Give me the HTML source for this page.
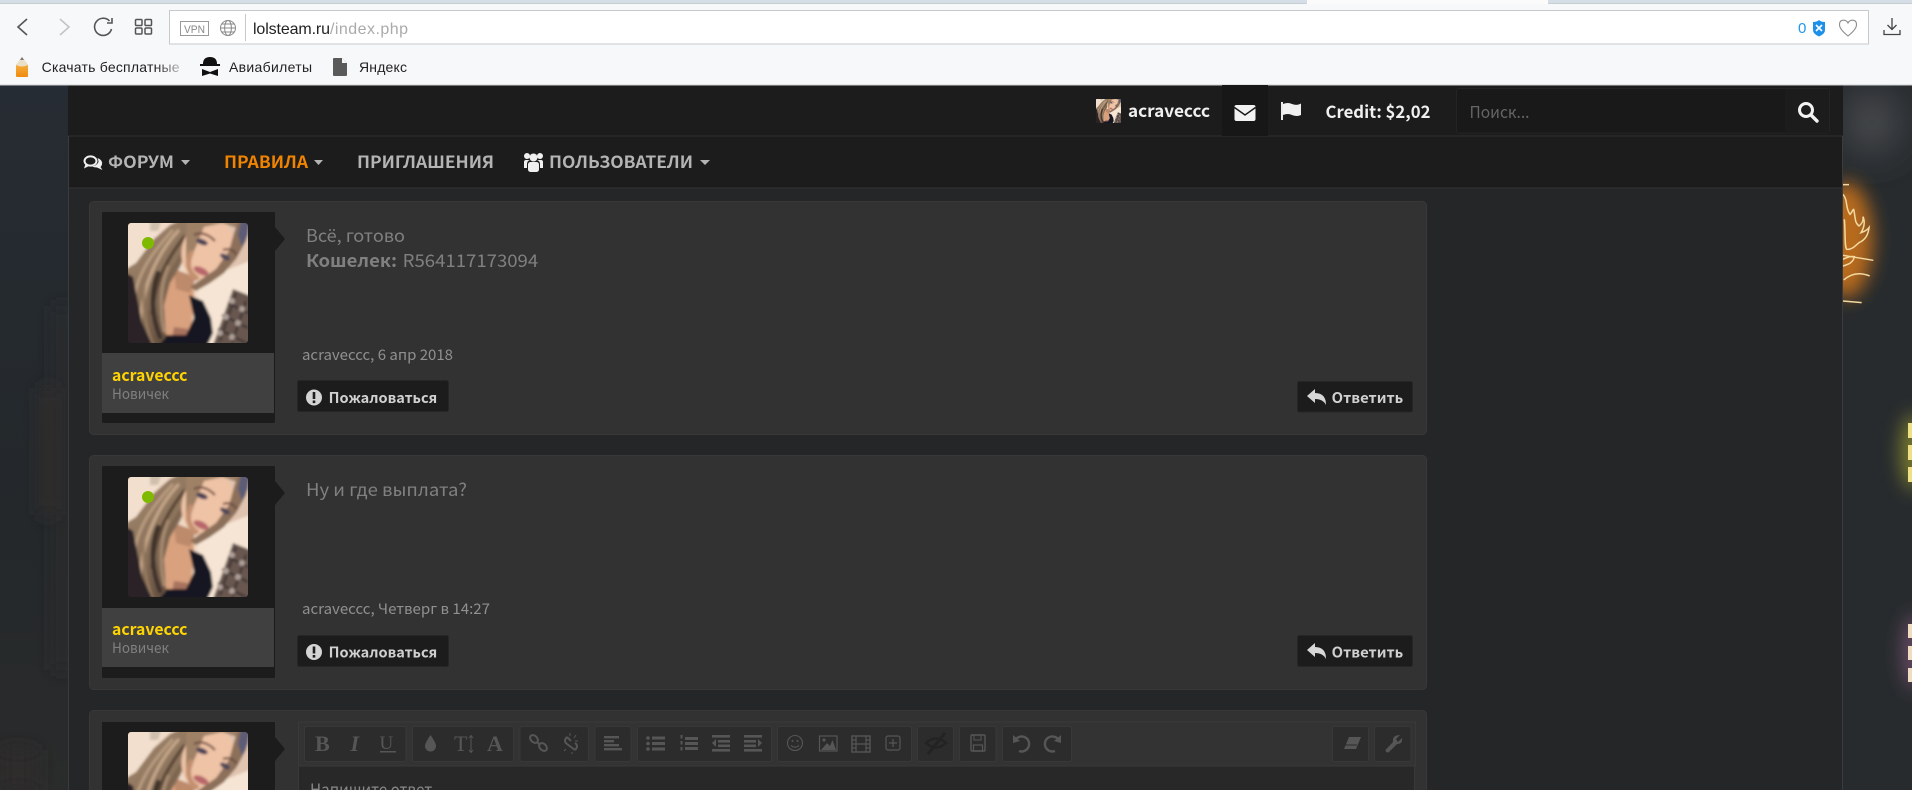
<!DOCTYPE html>
<html lang="ru"><head><meta charset="utf-8"><title>lolsteam.ru</title>
<style>
html,body{margin:0;padding:0;width:1912px;height:790px;overflow:hidden;background:#262a2d}
svg{display:block}
text{font-family:"Noto Sans CJK JP","DejaVu Sans",sans-serif;white-space:pre}
.ui{font-family:"Liberation Sans","Noto Sans CJK JP",sans-serif}
.nav{font-size:16.5px;font-weight:700;fill:#b4b4b4}
.msg{font-size:17.5px;fill:#808080}
.date{font-size:14.5px;fill:#909090}
.btn{font-size:14.5px;font-weight:700;fill:#d0d0d0}
.nm{font-size:16px;font-weight:700;fill:#ffd400}
.rank{font-size:14.5px;fill:#808080}
.ic{fill:none;stroke:#565656;stroke-width:2}
.if{fill:#565656}
.tb{fill:#2c2c2c;stroke:#383838}
.serif{font-family:"Liberation Serif",serif;fill:#565656;font-weight:700}
</style></head><body>
<svg width="1912" height="790" viewBox="0 0 1912 790" xmlns="http://www.w3.org/2000/svg">
<defs>
<filter id="b1" filterUnits="userSpaceOnUse" x="-20" y="-20" width="160" height="160"><feGaussianBlur stdDeviation="1.2"/></filter>
<filter id="b8" filterUnits="userSpaceOnUse" x="0" y="0" width="1912" height="790"><feGaussianBlur stdDeviation="9"/></filter>
<filter id="b12" filterUnits="userSpaceOnUse" x="0" y="0" width="1912" height="790"><feGaussianBlur stdDeviation="9"/></filter>
<filter id="b20" filterUnits="userSpaceOnUse" x="0" y="0" width="1912" height="790"><feGaussianBlur stdDeviation="20"/></filter>
<linearGradient id="lb" x1="0" y1="0" x2="0" y2="1"><stop offset="0" stop-color="#262c33"/><stop offset=".6" stop-color="#24282b"/><stop offset="1" stop-color="#2a2b2b"/></linearGradient>
<linearGradient id="fade" x1="0" y1="0" x2="1" y2="0"><stop offset=".82" stop-color="#222"/><stop offset="1" stop-color="#bbb"/></linearGradient>
<linearGradient id="hair" x1="0" y1="0" x2="0.6" y2="1"><stop offset="0" stop-color="#a58a70"/><stop offset=".55" stop-color="#8d745c"/><stop offset="1" stop-color="#5e493b"/></linearGradient>
<linearGradient id="pen" x1="0" y1="0" x2="0" y2="1"><stop offset="0" stop-color="#f7c35a"/><stop offset="1" stop-color="#f08a10"/></linearGradient>
<clipPath id="rr"><rect width="120" height="120" rx="3"/></clipPath>
<symbol id="ava" viewBox="0 0 120 120">
<g clip-path="url(#rr)"><g filter="url(#b1)">
<rect x="-10" y="-10" width="140" height="140" fill="#f0dac8"/>
<rect x="-5" y="-5" width="36" height="60" fill="#f3dfce"/>
<polygon points="22,-5 34,-5 30,8 22,8" fill="#cfc0ac"/>
<polygon points="100,-10 130,-10 130,60 100,60" fill="#e0c4b0"/>
<polygon points="70,58 130,35 130,130 70,130" fill="#f6e5d4"/>
<!-- chest -->
<polygon points="42,48 66,54 66,76 62,116 38,116 36,80" fill="#d9a17e"/>
<polygon points="46,46 68,54 62,70 48,66" fill="#bd8a6c"/>
<polygon points="46,104 60,106 58,116 44,116" fill="#a8735e"/>
<!-- dress -->
<polygon points="61,72 75,78 83,95 85,110 78,125 30,125 34,112 58,112 66,95" fill="#191724"/>
<!-- hair mass -->
<polygon points="66,-10 42,2 26,16 8,40 -5,48 -5,125 28,125 38,114 36,82 42,60 52,44 60,26 68,6 72,-10" fill="url(#hair)"/>
<g fill="none" stroke-linecap="round">
<path d="M50,8 C30,30 15,60 12,100" stroke="#c3a588" stroke-width="3.4"/>
<path d="M44,8 C26,28 8,50 6,80" stroke="#b99c80" stroke-width="3"/>
<path d="M56,14 C40,35 28,55 24,90" stroke="#584436" stroke-width="3.4"/>
<path d="M62,20 C50,40 36,55 33,85" stroke="#7b6550" stroke-width="4"/>
<path d="M30,50 C22,70 24,95 32,114" stroke="#3e312a" stroke-width="4.5"/>
<path d="M40,44 C33,60 31,85 36,108" stroke="#a98c72" stroke-width="3"/>
<path d="M16,62 C14,84 18,104 24,120" stroke="#957a60" stroke-width="3"/>
</g>
<!-- dark left edge -->
<polygon points="-5,48 5,54 11,84 14,100 26,125 -5,125" fill="#292327"/>
<!-- face -->
<ellipse cx="80" cy="27" rx="26" ry="32" transform="rotate(18 80 27)" fill="#efc3a5"/>
<polygon points="58,-8 116,-8 112,6 94,0 76,4 68,24 58,44" fill="#9f8166"/>
<polygon points="112,-8 124,-8 118,18 108,36 96,50 82,60 68,68 62,64 88,46 101,28 106,10" fill="#8c705a"/>
<polygon points="114,-8 122,-8 120,12 114,24 110,12" fill="#5c5b76"/>
<path d="M64,28 C58,40 60,50 70,56" stroke="#c3906f" stroke-width="5" fill="none"/>
<path d="M66,12 Q76,7 87,18" stroke="#6d4c40" stroke-width="2.2" fill="none"/>
<path d="M95,27 Q104,24 109,32" stroke="#6d4c40" stroke-width="2" fill="none"/>
<ellipse cx="74" cy="19" rx="6" ry="2.8" transform="rotate(20 74 19)" fill="#4a4156"/>
<ellipse cx="97" cy="34" rx="5.5" ry="2.6" transform="rotate(28 97 34)" fill="#4f4658"/>
<ellipse cx="73" cy="48" rx="8" ry="3.6" transform="rotate(25 73 48)" fill="#b8666a"/>
<!-- chocolate -->
<polygon points="105,66 125,74 125,125 84,125" fill="#67574f"/>
<path d="M100,80 L120,90 M94,92 L120,105 M90,106 L118,120 M108,70 L92,118 M118,78 L104,120" stroke="#3c3232" stroke-width="2.2"/>
<circle cx="104" cy="78" r="3" fill="#b0a098"/><circle cx="114" cy="86" r="3" fill="#b0a098"/><circle cx="98" cy="94" r="3" fill="#b0a098"/><circle cx="110" cy="100" r="3" fill="#b0a098"/><circle cx="92" cy="110" r="3" fill="#b0a098"/><circle cx="104" cy="114" r="3" fill="#b0a098"/>
</g></g>
</symbol>
</defs>

<!-- page background -->
<rect x="0" y="85" width="1912" height="705" fill="#272b2e"/>
<rect x="0" y="85" width="68" height="705" fill="url(#lb)"/>
<g filter="url(#b8)"><rect x="42" y="388" width="13" height="127" fill="#302f2c"/><rect x="56" y="306" width="12" height="364" fill="#2a2c2b"/><rect x="0" y="750" width="36" height="40" fill="#2d2c2a"/></g>
<g filter="url(#b20)"><ellipse cx="1872" cy="122" rx="26" ry="30" fill="#4d5052"/></g>
<g filter="url(#b12)"><ellipse cx="1846" cy="240" rx="27" ry="58" fill="#b86a1c"/>
<ellipse cx="1914" cy="452" rx="14" ry="38" fill="#77782f"/><ellipse cx="1914" cy="652" rx="12" ry="38" fill="#664a62"/></g>
<g transform="translate(1835 86) scale(.3333)" fill="none" stroke="#f3d9a0" stroke-width="4.5">
<path d="M22,296 H42"/>
<path d="M24,325 C40,345 30,365 45,385 C55,375 52,370 56,370 C62,395 58,410 72,420 C85,410 85,400 84,392 C92,410 85,430 78,440 C95,435 102,425 102,425 C100,445 90,462 72,470 C60,480 50,492 35,490 C28,480 32,440 28,400"/>
<path d="M24,508 L115,523"/><path d="M24,540 C40,535 55,530 58,512 C45,510 35,515 24,520"/>
<path d="M26,582 Q60,552 104,570"/><path d="M24,645 L80,650"/>
</g>
<g fill="#efe088"><rect x="1908" y="423" width="4" height="15"/><rect x="1908" y="445" width="4" height="15"/><rect x="1908" y="467" width="4" height="15"/></g>
<g fill="#f0dcc0"><rect x="1908" y="624" width="4" height="14"/><rect x="1908" y="646" width="4" height="14"/><rect x="1908" y="668" width="4" height="14"/></g>

<!-- container -->
<rect x="68" y="85" width="1775" height="705" fill="#242628"/>
<rect x="68" y="85" width="1775" height="51" fill="#1c1c1c"/>
<rect x="68" y="136" width="1775" height="52" fill="#1c1c1c"/>
<rect x="68" y="135.5" width="1775" height="1" fill="#303030"/>
<rect x="68" y="187.5" width="1775" height="1" fill="#333"/>
<rect x="68" y="136" width="1" height="654" fill="#3a3b3c"/>
<rect x="1842" y="136" width="1" height="654" fill="#3a3c3e"/>

<!-- browser chrome -->
<rect x="0" y="0" width="1912" height="85" fill="#f7f8fa"/>
<rect x="0" y="0" width="1912" height="3" fill="#d5dee6"/>
<rect x="0" y="3" width="1912" height="1" fill="#c9ced3"/>
<rect x="1307" y="0" width="241" height="4" fill="#fbfbfb"/>
<rect x="0" y="84.5" width="1912" height="1" fill="#cfd0d0"/>
<rect x="169.5" y="10.5" width="1699" height="33.5" fill="#fff" stroke="#c6cacd"/>
<path d="M27,19 L18,27 L27,35" fill="none" stroke="#555" stroke-width="1.6"/>
<path d="M60,19 L69,27 L60,35" fill="none" stroke="#c4c4c4" stroke-width="1.6"/>
<path d="M109.500,21 A8.6,8.6 0 1 0 111.500,29" fill="none" stroke="#555" stroke-width="1.6"/>
<path d="M112,18 V23 H107" fill="none" stroke="#555" stroke-width="1.6"/>
<g fill="none" stroke="#555" stroke-width="1.5"><rect x="135.5" y="19.5" width="6.5" height="6" rx="1"/><rect x="145" y="19.5" width="6.5" height="6" rx="1"/><rect x="135.5" y="28" width="6.5" height="6" rx="1"/><rect x="145" y="28" width="6.5" height="6" rx="1"/></g>
<rect x="180.5" y="21.5" width="28" height="14" fill="none" stroke="#999"/>
<text class="ui" x="184" y="33" font-size="11" fill="#888" textLength="21" lengthAdjust="spacingAndGlyphs">VPN</text>
<g fill="none" stroke="#888" stroke-width="1"><circle cx="228" cy="28" r="7.5"/><ellipse cx="228" cy="28" rx="3.4" ry="7.5"/><path d="M220.5,28 H235.5 M221.5,24 H234.5 M221.5,32 H234.5"/></g>
<rect x="245" y="14" width="1" height="27" fill="#c8c8c8"/>
<text class="ui" x="253" y="34" font-size="16" fill="#222" textLength="77">lolsteam.ru</text>
<text class="ui" x="330" y="34" font-size="16" fill="#aaa" textLength="78">/index.php</text>
<text class="ui" x="1798" y="33" font-size="15" fill="#2196f3">0</text>
<path d="M1813,22 Q1817,22 1819,20 Q1821,22 1825,22 V30 Q1825,34 1819,36.5 Q1813,34 1813,30 Z" fill="#1d90ea"/>
<path d="M1816,25 L1822,31 M1822,25 L1816,31" stroke="#fff" stroke-width="1.6"/>
<path d="M1848,36 C1842,31 1839.5,28 1839.5,24.5 C1839.5,19 1846,19 1848,23 C1850,19 1856.5,19 1856.5,24.5 C1856.5,28 1854,31 1848,36 Z" fill="none" stroke="#8d8d8d" stroke-width="1.1"/>
<path d="M1892,18 V29 M1887.5,25 L1892,29.5 L1896.5,25 M1884,30 V34.5 H1900 V30" fill="none" stroke="#444" stroke-width="1.3"/>
<!-- bookmarks -->
<path d="M22,57 L28,65 V76 Q28,77 27,77 H17 Q16,77 16,76 V65 Z" fill="url(#pen)"/><path d="M22,57 L28,65 Q22,68 16,65 Z" fill="#eadfc8"/><path d="M22,57 L24,60 H20 Z" fill="#777"/>
<text class="ui" x="41.6" y="72" font-size="14" fill="url(#fade)" textLength="138">Скачать бесплатные</text>
<path d="M203,64 Q203,57 210,57 Q217,57 217,64 H220 V66 H200 V64 Z" fill="#111"/>
<path d="M202,69 L210,72 L218,69 V76 L210,73.5 L202,76 Z" fill="#111"/>
<text class="ui" x="229" y="72" font-size="14" fill="#222" textLength="83">Авиабилеты</text>
<path d="M333,59 Q333,58 334,58 H342 L347,63 V75 Q347,76 346,76 H334 Q333,76 333,75 Z" fill="#5a5a5a"/><path d="M342,58 V63 H347 Z" fill="#f7f8fa"/>
<text class="ui" x="359" y="72" font-size="14" fill="#222" textLength="48">Яндекс</text>

<!-- top bar -->
<svg x="1096" y="99" width="25" height="24" viewBox="0 0 120 120" preserveAspectRatio="none"><use href="#ava" width="120" height="120"/></svg>
<text x="1128" y="117" font-size="17" font-weight="700" fill="#f0f0f0" textLength="82" lengthAdjust="spacingAndGlyphs">acraveccc</text>
<rect x="1222" y="85" width="46" height="51" fill="#171717"/>
<rect x="1234.5" y="105" width="21" height="16" rx="2" fill="#f2f2f2"/>
<path d="M1234.5,107.5 L1245,115 L1255.5,107.5" fill="none" stroke="#171717" stroke-width="1.4"/>
<rect x="1281" y="102" width="2" height="18" fill="#e8e8e8"/>
<path d="M1283,104 Q1288,102 1292,104 Q1297,106 1301,103.5 V115 Q1297,117 1292,115 Q1288,113 1283,115 Z" fill="#f0f0f0"/>
<text x="1325.5" y="118" font-size="17" font-weight="700" fill="#f0f0f0" textLength="105" lengthAdjust="spacingAndGlyphs">Credit: $2,02</text>
<rect x="1456.5" y="88.5" width="373" height="44.5" rx="2" fill="#191919" stroke="#242424"/>
<rect x="1785" y="89" width="44" height="44" fill="#1c1c1c"/>
<text x="1469.5" y="118" font-size="16.5" fill="#666" textLength="60" lengthAdjust="spacingAndGlyphs">Поиск...</text>
<circle cx="1806" cy="110" r="6.5" fill="none" stroke="#f2f2f2" stroke-width="3"/><path d="M1811,115 L1817,121" stroke="#f2f2f2" stroke-width="3.4" stroke-linecap="round"/>

<!-- nav -->
<ellipse cx="90.5" cy="161" rx="6" ry="4.6" fill="none" stroke="#f0f0f0" stroke-width="2"/>
<path d="M85.500,164 L84,168.500 L90,165.500 Z" fill="#f0f0f0"/>
<path d="M97.500,158 Q103,160 102,164.500 Q101.500,166 100.500,167 L102.500,170 L97,167.500 Q94,167.500 92,166.500 Q97,165.500 98.500,162 Q98.500,160 97.500,158 Z" fill="#f0f0f0"/>
<text class="nav" x="108" y="168" textLength="66" lengthAdjust="spacingAndGlyphs">ФОРУМ</text>
<path d="M181,160 H190 L185.5,165 Z" fill="#b4b4b4"/>
<text class="nav" x="224" y="168" textLength="84" lengthAdjust="spacingAndGlyphs" style="fill:#f08300">ПРАВИЛА</text>
<path d="M314,160 H323 L318.5,165 Z" fill="#b4b4b4"/>
<text class="nav" x="357" y="168" textLength="137" lengthAdjust="spacingAndGlyphs">ПРИГЛАШЕНИЯ</text>
<g fill="#f0f0f0"><circle cx="533.5" cy="157.5" r="4"/><circle cx="527" cy="156" r="3"/><circle cx="540" cy="156" r="3"/><rect x="528" y="162" width="11" height="10" rx="2.5"/><path d="M524,168 V162 Q524,160 526,160 H530 Q527,161 527,164 V168 Z"/><path d="M543,168 V162 Q543,160 541,160 H537 Q540,161 540,164 V168 Z"/></g>
<text class="nav" x="549" y="168" textLength="144" lengthAdjust="spacingAndGlyphs">ПОЛЬЗОВАТЕЛИ</text>
<path d="M700,160 H710 L705,165 Z" fill="#b4b4b4"/>

<!-- post 1 -->
<rect x="89.5" y="201.5" width="1337" height="233" rx="4" fill="#323232" stroke="#383838"/>
<rect x="102" y="212" width="173" height="211" rx="1.5" fill="#1c1c1c"/>
<path d="M275,227 L285,239 L275,251 Z" fill="#1c1c1c"/>
<use href="#ava" x="128" y="223" width="120" height="120"/>
<circle cx="148" cy="243" r="6" fill="#7fba00"/>
<rect x="102" y="353" width="172" height="60" fill="#404040"/>
<text class="nm" x="112" y="381" textLength="75.5" lengthAdjust="spacingAndGlyphs">acraveccc</text>
<text class="rank" x="112" y="399" textLength="57" lengthAdjust="spacingAndGlyphs">Новичек</text>
<text class="msg" x="306" y="242" textLength="99" lengthAdjust="spacingAndGlyphs">Всё, готово</text>
<text class="msg" x="306" y="267" font-weight="700" textLength="91" lengthAdjust="spacingAndGlyphs">Кошелек:</text>
<text class="msg" x="402.7" y="267" textLength="135.5" lengthAdjust="spacingAndGlyphs">R564117173094</text>
<text class="date" x="302" y="360" textLength="151" lengthAdjust="spacingAndGlyphs">acraveccc, 6 апр 2018</text>
<rect x="297.5" y="380.5" width="151" height="31" rx="2" fill="#1c1c1c" stroke="#262626"/>
<circle cx="314" cy="397.5" r="8" fill="#d4d4d4"/><rect x="312.7" y="392" width="2.6" height="7" fill="#1c1c1c"/><rect x="312.7" y="400.5" width="2.6" height="2.6" fill="#1c1c1c"/>
<text class="btn" x="328.7" y="403" textLength="108.6" lengthAdjust="spacingAndGlyphs">Пожаловаться</text>
<rect x="1297.5" y="381.5" width="115" height="30.5" rx="2" fill="#1c1c1c" stroke="#262626"/>
<path d="M1307,396 L1315,389 V393 Q1326,393 1326,405 Q1323,399 1315,399 V403 Z" fill="#d8d8d8"/>
<text class="btn" x="1331.7" y="403" textLength="71.5" lengthAdjust="spacingAndGlyphs">Ответить</text>

<!-- post 2 -->
<rect x="89.5" y="455.5" width="1337" height="234" rx="4" fill="#323232" stroke="#383838"/>
<rect x="102" y="466" width="173" height="212" rx="1.5" fill="#1c1c1c"/>
<path d="M275,481 L285,493 L275,505 Z" fill="#1c1c1c"/>
<use href="#ava" x="128" y="477" width="120" height="120"/>
<circle cx="148" cy="497" r="6" fill="#7fba00"/>
<rect x="102" y="608" width="172" height="59" fill="#404040"/>
<text class="nm" x="112" y="635" textLength="75.5" lengthAdjust="spacingAndGlyphs">acraveccc</text>
<text class="rank" x="112" y="653" textLength="57" lengthAdjust="spacingAndGlyphs">Новичек</text>
<text class="msg" x="306" y="496" textLength="161" lengthAdjust="spacingAndGlyphs">Ну и где выплата?</text>
<text class="date" x="302" y="614" textLength="188" lengthAdjust="spacingAndGlyphs">acraveccc, Четверг в 14:27</text>
<rect x="297.5" y="635.5" width="151" height="31" rx="2" fill="#1c1c1c" stroke="#262626"/>
<circle cx="314" cy="652" r="8" fill="#d4d4d4"/><rect x="312.7" y="646.5" width="2.6" height="7" fill="#1c1c1c"/><rect x="312.7" y="655" width="2.6" height="2.6" fill="#1c1c1c"/>
<text class="btn" x="328.7" y="657.5" textLength="108.6" lengthAdjust="spacingAndGlyphs">Пожаловаться</text>
<rect x="1297.5" y="635.5" width="115" height="31" rx="2" fill="#1c1c1c" stroke="#262626"/>
<path d="M1307,650 L1315,643 V647 Q1326,647 1326,659 Q1323,653 1315,653 V657 Z" fill="#d8d8d8"/>
<text class="btn" x="1331.7" y="657.5" textLength="71.5" lengthAdjust="spacingAndGlyphs">Ответить</text>

<!-- reply box -->
<rect x="89.5" y="710.5" width="1337" height="90" rx="4" fill="#323232" stroke="#383838"/>
<rect x="102" y="722" width="173" height="68" fill="#1c1c1c"/>
<path d="M275,737 L285,749 L275,761 Z" fill="#1c1c1c"/>
<svg x="128" y="732" width="120" height="58" viewBox="0 0 120 58"><use href="#ava" width="120" height="120"/></svg>
<rect x="298.5" y="722" width="1117" height="44" fill="#333" stroke="#393939"/>
<rect x="298.5" y="766" width="1116" height="30" fill="#282828" stroke="#393939"/>
<g class="tb">
<rect x="304.5" y="726.5" width="101.5" height="35" rx="2"/><rect x="412.5" y="726.5" width="101" height="35" rx="2"/><rect x="520" y="726.5" width="68.5" height="35" rx="2"/><rect x="595" y="726.5" width="36" height="35" rx="2"/><rect x="637.5" y="726.5" width="134" height="35" rx="2"/><rect x="777.5" y="726.5" width="134" height="35" rx="2"/><rect x="917.5" y="726.5" width="36" height="35" rx="2"/><rect x="959.5" y="726.5" width="36.5" height="35" rx="2"/><rect x="1002.5" y="726.5" width="69" height="35" rx="2"/><rect x="1332.5" y="726.5" width="36" height="35" rx="2"/><rect x="1374.5" y="726.5" width="36.5" height="35" rx="2"/>
</g>
<text class="serif" x="315" y="751" font-size="22">B</text>
<text class="serif" x="350.5" y="751" font-size="22" font-style="italic">I</text>
<text class="serif" x="379.5" y="749" font-size="19" style="font-weight:400">U</text><rect x="380" y="751" width="16" height="1.5" fill="#565656"/>
<path class="if" d="M430.5,735 Q436,743 436,746 A5.5,5.5 0 0 1 425,746 Q425,743 430.5,735 Z"/>
<text class="serif" x="454" y="751" font-size="22" style="font-weight:400">T</text><path d="M471,736 V752 M469,738 L471,735.5 L473,738 M469,750 L471,752.5 L473,750" stroke="#565656" fill="none" stroke-width="1"/>
<text class="serif" x="487" y="751" font-size="22">A</text>
<g class="ic" stroke-width="2.2"><ellipse cx="534" cy="739" rx="4.5" ry="3.2" transform="rotate(45 534 739)"/><ellipse cx="543" cy="747" rx="4.5" ry="3.2" transform="rotate(45 543 747)"/><path d="M537,742 L540,745"/></g>
<g class="ic" stroke-width="2"><path d="M567,737 Q563,741 567,744 M575,750 Q579,746 575,743 M567,744 L575,750 M567,737 L571,741"/><path d="M570,733 V736 M576,735 L574,738 M564,751 L566,749 M578,741 H575 M572,752 V754" stroke-width="1"/></g>
<g class="if"><rect x="604" y="736" width="15" height="2.4"/><rect x="604" y="740" width="10" height="2.4"/><rect x="604" y="744" width="15" height="2.4"/><rect x="604" y="748" width="18" height="2.4"/></g>
<g class="if"><circle cx="648" cy="738" r="1.8"/><circle cx="648" cy="743.5" r="1.8"/><circle cx="648" cy="749" r="1.8"/><rect x="652" y="736.5" width="13" height="3"/><rect x="652" y="742" width="13" height="3"/><rect x="652" y="747.5" width="13" height="3"/></g>
<g class="if"><rect x="685" y="737" width="13" height="3"/><rect x="685" y="742" width="13" height="3"/><rect x="685" y="747" width="13" height="3"/><rect x="680.5" y="735" width="2" height="3.5"/><rect x="680.5" y="741" width="2" height="3.5"/><rect x="680.5" y="747" width="2" height="3.5"/></g>
<g class="if"><rect x="712" y="735" width="18" height="2.6"/><rect x="718" y="740" width="12" height="2.6"/><rect x="718" y="744.5" width="12" height="2.6"/><rect x="712" y="749" width="18" height="2.6"/><path d="M716,739 V747 L712,743 Z"/></g>
<g class="if"><rect x="744" y="735" width="18" height="2.6"/><rect x="744" y="740" width="12" height="2.6"/><rect x="744" y="744.5" width="12" height="2.6"/><rect x="744" y="749" width="18" height="2.6"/><path d="M758,739 V747 L762,743 Z"/></g>
<g fill="none" stroke="#565656" stroke-width="1.1"><circle cx="795" cy="743" r="7.5"/><path d="M791,745.5 Q795,749 799,745.5"/></g><circle cx="792.5" cy="741" r="1" fill="#565656"/><circle cx="797.5" cy="741" r="1" fill="#565656"/>
<rect x="819.5" y="736" width="17.5" height="15" fill="none" stroke="#565656" stroke-width="1.2"/><path class="if" d="M821,750 L827,743 L830,746 L832.5,740 L836,750 Z"/><circle cx="824" cy="740" r="1.6" fill="#565656"/>
<rect x="852" y="736" width="18" height="16" fill="none" stroke="#565656" stroke-width="1.4"/><path d="M856,736 V752 M866,736 V752 M856,744 H866 M852,740 H856 M852,744 H856 M852,748 H856 M866,740 H870 M866,744 H870 M866,748 H870" stroke="#565656" stroke-width="1.2" fill="none"/>
<rect x="886" y="736" width="14" height="14" rx="2" fill="none" stroke="#565656" stroke-width="1.2"/><path d="M893,739 V747 M889,743 H897" stroke="#565656" stroke-width="1.2"/>
<g fill="none" stroke="#232323" stroke-width="2.4"><path d="M926,743 Q936,734 946,743 Q936,752 926,743 Z"/><path d="M928,754 L945,733" stroke-width="3"/></g>
<rect x="971" y="735" width="14" height="16" rx="1" fill="none" stroke="#565656" stroke-width="1.4"/><rect x="974" y="735" width="7" height="5" fill="none" stroke="#565656" stroke-width="1"/><rect x="973.5" y="745" width="9" height="6" fill="none" stroke="#565656" stroke-width="1.2"/>
<path d="M1016,739 A7.5,7.5 0 1 1 1019,751" fill="none" stroke="#565656" stroke-width="2.4"/><path class="if" d="M1013,735 L1020,741 L1013,743 Z"/>
<path d="M1058,739 A7.5,7.5 0 1 0 1055,751" fill="none" stroke="#565656" stroke-width="2.4"/><path class="if" d="M1061,735 L1054,741 L1061,743 Z"/>
<path class="if" d="M1349,737 H1361 L1356,749 H1344 Z"/><path d="M1345,745 H1357" stroke="#2c2c2c" stroke-width="1"/>
<path class="if" d="M1400,735 L1396,739 L1398,742 L1402,738 Q1403,744 1397,744 L1389,752 Q1386,753.500 1385.500,750 L1393,742 Q1392,735 1400,735 Z"/>
<text x="310" y="796" font-size="17" fill="#888" textLength="135" lengthAdjust="spacingAndGlyphs">Напишите ответ...</text>
</svg>
</body></html>
